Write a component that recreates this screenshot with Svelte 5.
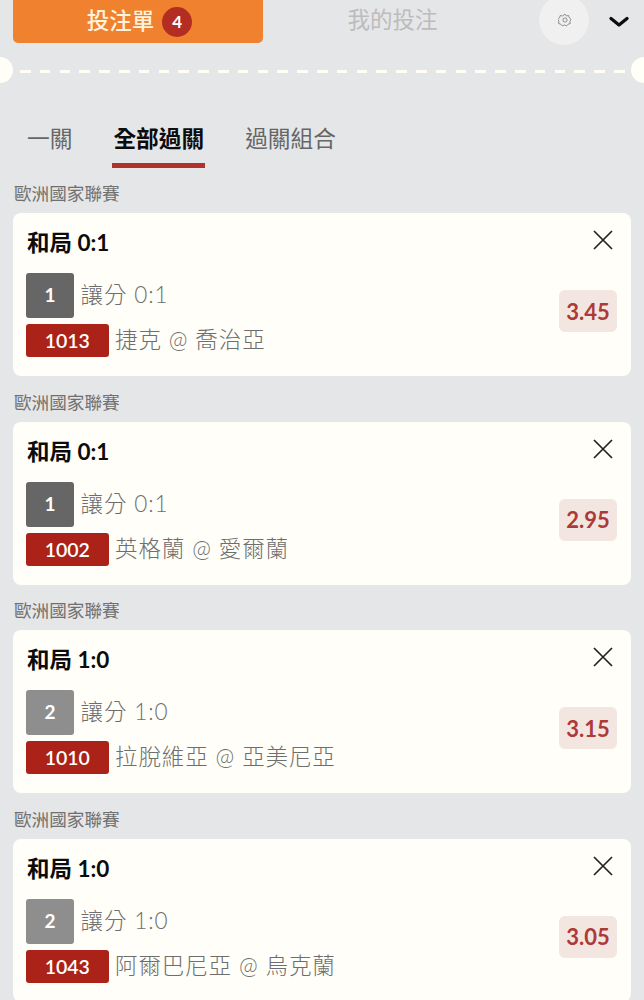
<script>
  const bets = [
    { title: '和局 0:1', num: 1, handicap: '讓分 0:1', code: '1013', match: '捷克 @ 喬治亞', odds: '3.45' },
    { title: '和局 0:1', num: 1, handicap: '讓分 0:1', code: '1002', match: '英格蘭 @ 愛爾蘭', odds: '2.95' },
    { title: '和局 1:0', num: 2, handicap: '讓分 1:0', code: '1010', match: '拉脫維亞 @ 亞美尼亞', odds: '3.15' },
    { title: '和局 1:0', num: 2, handicap: '讓分 1:0', code: '1043', match: '阿爾巴尼亞 @ 烏克蘭', odds: '3.05' }
  ];
</script>

<div class="page">
  <header class="top">
    <div class="slip"><span class="slip-label">投注單</span><span class="count">4</span></div>
    <div class="mine">我的投注</div>
    <div class="gear">
      <svg width="14" height="14" viewBox="0 0 24 24" fill="none" stroke="#777" stroke-width="1.4" stroke-linejoin="round">
        <path d="M12 1.8l2.3 3.2 3.9-.6 1.1 3.8 3 2.6-1.9 3.4.6 3.9-3.8 1.1-2.6 3-3.6-1.7-3.6 1.7-2.6-3-3.8-1.1.6-3.9-1.9-3.4 3-2.6 1.1-3.8 3.9.6z" />
        <circle cx="12" cy="12" r="3.6" />
      </svg>
    </div>
    <svg class="chev" width="20" height="12" viewBox="0 0 20 12" fill="none" stroke="#0c0c0c" stroke-width="3.2" stroke-linecap="round" stroke-linejoin="round">
      <path d="M2 2.5l8 6.5 8-6.5" />
    </svg>
  </header>

  <div class="divider">
    <span class="notch left"></span>
    <span class="dash"></span>
    <span class="notch right"></span>
  </div>

  <nav class="tabs">
    <span class="tab">一關</span>
    <span class="tab active">全部過關</span>
    <span class="tab">過關組合</span>
  </nav>

  <div class="list">
    {#each bets as b}
      <section class="group">
        <div class="league">歐洲國家聯賽</div>
        <article class="card">
          <div class="info">
            <div class="title">{b.title}</div>
            <div class="row first">
              <span class="num" class:dark={b.num === 1}>{b.num}</span>
              <span class="txt">{b.handicap}</span>
            </div>
            <div class="row second">
              <span class="code">{b.code}</span>
              <span class="txt">{b.match}</span>
            </div>
          </div>
          <div class="side">
            <svg class="close" width="22" height="22" viewBox="0 0 22 22" fill="none" stroke="#222" stroke-width="1.7">
              <path d="M2 2l18 18M20 2L2 20" />
            </svg>
            <span class="odds">{b.odds}</span>
          </div>
        </article>
      </section>
    {/each}
  </div>
</div>

<style>
  :global(body) {
    margin: 0;
    background: #e5e6e8;
  }
  .page {
    height: 1000px;
    overflow: hidden;
    background: #e5e6e8;
    font-family: Lato, "Noto Sans CJK TC", sans-serif;
  }
  .top {
    display: flex;
    align-items: flex-start;
    height: 43px;
    padding-left: 13px;
  }
  .slip {
    width: 250px;
    height: 43px;
    box-sizing: border-box;
    display: flex;
    align-items: center;
    justify-content: center;
    gap: 8px;
    padding-left: 3px;
    background: #f0812f;
    border-radius: 0 0 5px 5px;
    color: #fff3dc;
    font-size: 22.5px;
    font-weight: 500;
  }
  .slip-label {
    padding-bottom: 5px;
  }
  .count {
    width: 30px;
    height: 30px;
    border-radius: 50%;
    background: #b32d22;
    color: #fff;
    display: flex;
    align-items: center;
    justify-content: center;
    font-size: 17px;
    font-weight: 700;
  }
  .mine {
    width: 259px;
    text-align: center;
    line-height: 39px;
    font-size: 22.5px;
    color: #bcbcbc;
  }
  .gear {
    width: 50px;
    height: 50px;
    margin: -5px 0 0 17px;
    padding-left: 1px;
    box-sizing: border-box;
    flex: none;
    border-radius: 50%;
    background: #f0f0f1;
    display: flex;
    align-items: center;
    justify-content: center;
  }
  .chev {
    margin: 16px 0 0 20px;
    flex: none;
  }
  .divider {
    position: relative;
    height: 26px;
    margin-top: 14px;
    display: flex;
    align-items: center;
  }
  .dash {
    flex: 1;
    height: 3px;
    margin: 2px 14px 0 20px;
    background: repeating-linear-gradient(90deg, #fffdf6 0 10.5px, transparent 10.5px 19.8px);
  }
  .notch {
    position: absolute;
    top: 0;
    width: 26px;
    height: 26px;
    border-radius: 50%;
    background: #fffef7;
  }
  .notch.left { left: -13px; }
  .notch.right { right: -13px; }
  .tabs {
    display: flex;
    gap: 41px;
    padding-left: 27px;
    margin-top: 39px;
    height: 53px;
  }
  .tab {
    font-size: 22.7px;
    line-height: 33px;
    color: #666;
  }
  .tab.active {
    position: relative;
    height: 46px;
    color: #0c0c0c;
    font-weight: 700;
  }
  .tab.active::after {
    content: "";
    position: absolute;
    left: -1px;
    right: -1px;
    bottom: 0;
    height: 5px;
    background: #b0302a;
  }
  .list {
    display: flex;
    flex-direction: column;
    gap: 7.67px;
    padding: 0 13px;
  }
  .league {
    height: 38px;
    padding: 7px 0 0 1px;
    box-sizing: border-box;
    font-size: 17.6px;
    line-height: 24px;
    color: #707070;
  }
  .card {
    display: flex;
    justify-content: space-between;
    height: 163px;
    box-sizing: border-box;
    padding: 14px 14px 0 13px;
    background: #fffef8;
    border-radius: 8px;
  }
  .title {
    height: 32px;
    padding-left: 1px;
    font-size: 22.5px;
    line-height: 32px;
    font-weight: 700;
    color: #0c0c0c;
  }
  .row {
    display: flex;
    align-items: center;
    gap: 6.5px;
  }
  .row.first { margin-top: 14px; height: 45px; }
  .row.second { margin-top: 6px; height: 33px; }
  .num {
    width: 48px;
    height: 45px;
    box-sizing: border-box;
    padding-bottom: 2px;
    display: flex;
    align-items: center;
    justify-content: center;
    border-radius: 3px;
    background: #8e8e8e;
    color: #fff;
    font-size: 19px;
    font-weight: 700;
  }
  .num.dark { background: #666; }
  .code {
    width: 82.5px;
    height: 33px;
    display: flex;
    align-items: center;
    justify-content: center;
    border-radius: 3px;
    background: #ab2318;
    color: #fff;
    font-size: 19.5px;
    font-weight: 600;
  }
  .txt {
    padding-bottom: 1px;
    line-height: 26px;
    font-size: 22.5px;
    font-weight: 300;
    color: #6e6e6e;
    letter-spacing: 0.9px;
  }
  .side {
    position: relative;
    width: 60px;
    display: flex;
    flex-direction: column;
    align-items: flex-end;
  }
  .close {
    position: absolute;
    top: 2px;
    right: 3px;
  }
  .odds {
    position: absolute;
    top: 63px;
    right: 0;
    width: 58px;
    height: 42px;
    display: flex;
    align-items: center;
    justify-content: center;
    border-radius: 6px;
    background: #f3e6e0;
    color: #ab3a38;
    font-size: 22px;
    font-weight: 700;
  }
</style>
